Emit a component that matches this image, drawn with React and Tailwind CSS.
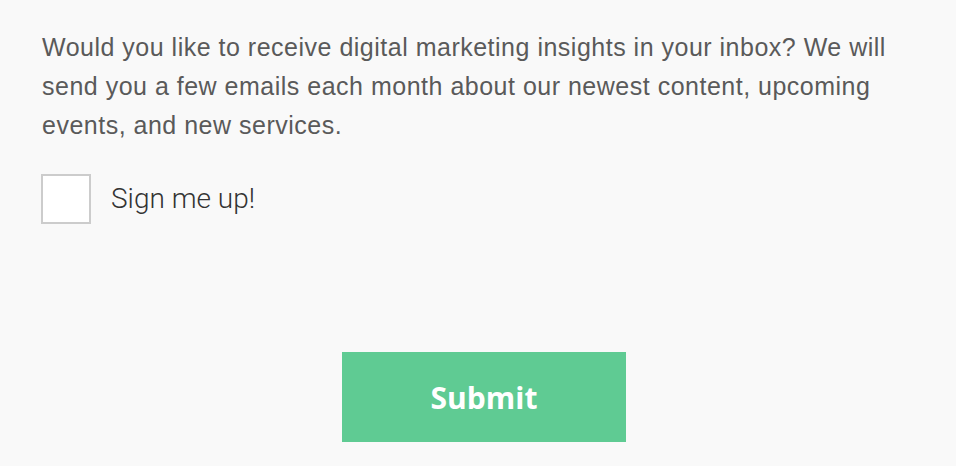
import React from 'react';

const App = () => {
  return (
    <div className="min-h-[466px] w-full bg-[#f9f9f9] overflow-hidden">
      <form className="w-[884px] ml-[42px] pt-[28px] flex flex-col">
        {/* Newsletter opt-in copy */}
        <p className="text-[25px] leading-[39px] text-[#5a5a5a] font-['Liberation_Sans',Arial,sans-serif] tracking-[0.5px]">
          Would you like to receive digital marketing insights in your inbox? We will send you a few emails each month about our newest content, upcoming events, and new services.
        </p>

        <label className="mt-[29px] flex items-center gap-[20px] w-fit cursor-pointer">
          <span className="w-[50px] h-[50px] bg-white border-2 border-[#cccccc] -ml-px"></span>
          <span className="text-[28px] font-light text-[#333333] font-['Roboto',sans-serif]">Sign me up!</span>
        </label>

        <div className="mt-[128px] flex justify-center">
          <button
            type="button"
            className="w-[284px] h-[90px] bg-[#5fcb93] text-white text-[30px] font-bold font-['Open_Sans',sans-serif]"
          >
            Submit
          </button>
        </div>
      </form>
    </div>
  );
};

export default App;
